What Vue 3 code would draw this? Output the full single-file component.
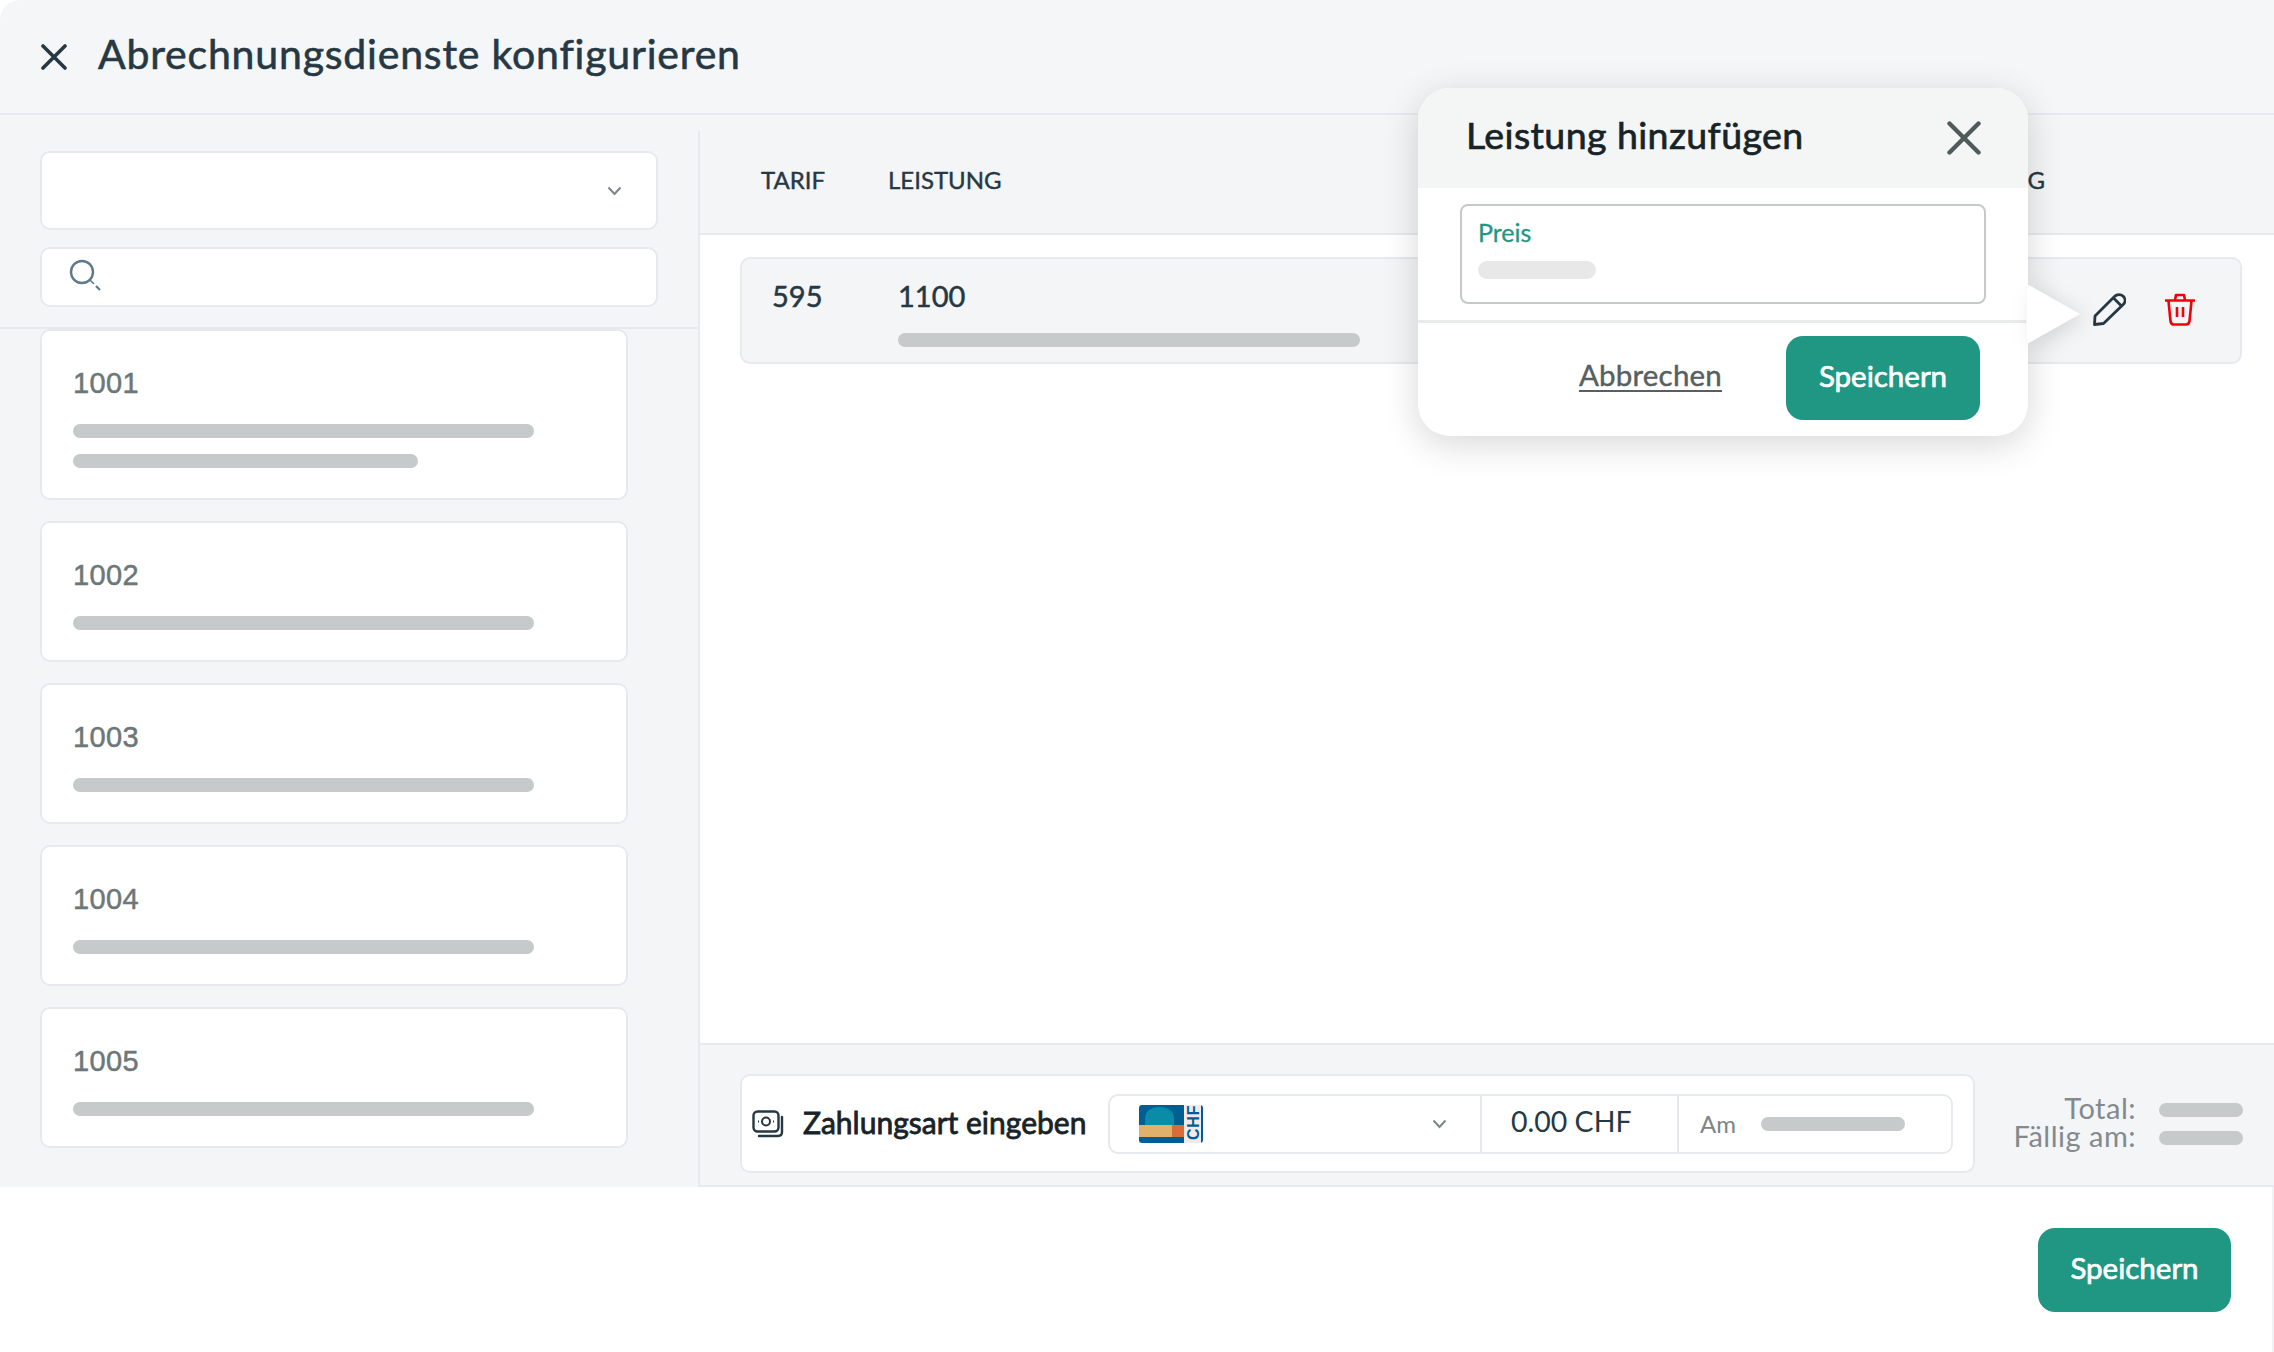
<script setup>
const cards = [
  { id: '1001', bars: [461, 345] },
  { id: '1002', bars: [461] },
  { id: '1003', bars: [461] },
  { id: '1004', bars: [461] },
  { id: '1005', bars: [461] },
]
</script>

<template>
  <div class="app">
    <header class="top">
      <svg class="close" viewBox="0 0 26 26" width="26" height="26"><path d="M2 2 L24 24 M24 2 L2 24" stroke="#263843" stroke-width="3.6" stroke-linecap="round" fill="none"/></svg>
      <h1>Abrechnungsdienste konfigurieren</h1>
    </header>

    <main class="main">
      <aside class="left">
        <div class="filters">
          <div class="select">
            <svg viewBox="0 0 14 10" width="15" height="10"><path d="M1 1.5 L7 8 L13 1.5" stroke="#7c8589" stroke-width="2" fill="none"/></svg>
          </div>
          <div class="search">
            <svg class="search-icon" viewBox="0 0 32 32" width="32" height="32"><circle cx="13" cy="13" r="11" stroke="#5d7a8a" stroke-width="2.4" fill="none"/><path d="M21 21 L25 25" stroke="#5d7a8a" stroke-width="1.6"/><path d="M27 27 L31 31" stroke="#5d7a8a" stroke-width="2.2"/></svg>
          </div>
        </div>
        <div class="cards">
          <div v-for="c in cards" :key="c.id" class="card">
            <div class="card-id">{{ c.id }}</div>
            <div class="card-bars">
              <span v-for="(b, i) in c.bars" :key="i" class="bar" :style="{ width: b + 'px' }"></span>
            </div>
          </div>
        </div>
      </aside>

      <section class="right">
        <div class="thead">
          <span class="th-tarif">TARIF</span>
          <span>LEISTUNG</span>
          <span class="th-end">G</span>
        </div>
        <div class="body">
          <div class="row">
            <div class="cell-tarif">595</div>
            <div class="cell-main">
              <div>1100</div>
              <span class="bar row-bar"></span>
            </div>
            <div class="actions">
              <svg viewBox="0 0 33 33" width="33" height="33"><path d="M1.5 31.5 L2 23 L21.5 3.5 C24 1 27.8 1 30.2 3.3 C32.6 5.8 32.6 9.2 30.2 11.6 L10.5 30.5 Z M20.5 5 L28.5 13" stroke="#263843" stroke-width="2.8" fill="none" stroke-linejoin="round"/></svg>
              <svg viewBox="0 0 32 33" width="32" height="33"><path d="M1 7.5 H31 M11 7 L12 2 H20 L21 7 M4.5 8 L6.5 28 C6.8 30.5 8 31.5 10 31.5 H22 C24 31.5 25.2 30.5 25.5 28 L27.5 8 M13 14 V24 M19 14 V24" stroke="#f4000b" stroke-width="2.6" fill="none" stroke-linejoin="round"/></svg>
            </div>
          </div>
        </div>
        <div class="bottom">
          <div class="pay">
            <svg class="pay-icon" viewBox="0 0 32 28" width="32" height="28"><rect x="1.5" y="1.5" width="25" height="20" rx="4" stroke="#263843" stroke-width="2.4" fill="none"/><circle cx="14" cy="11.5" r="4" stroke="#263843" stroke-width="2" fill="none"/><path d="M6 11.5 H7 M21 11.5 H22" stroke="#263843" stroke-width="2"/><path d="M30 7 V22 C30 24.5 28.5 26 26 26 H7" stroke="#263843" stroke-width="2.4" fill="none" stroke-linecap="round"/></svg>
            <span class="pay-label">Zahlungsart eingeben</span>
            <div class="pay-ctl">
              <div class="pay-method">
                <svg class="chf" viewBox="0 0 64 38" width="64" height="38">
                  <rect width="64" height="38" rx="3" fill="#005f92"/>
                  <path d="M6 20 V14 C6 6 12 2 20.5 2 C29 2 35 6 35 14 V20 Z" fill="#0a8ca8"/>
                  <rect y="20" width="33" height="12" fill="#dfb16b"/>
                  <rect x="33" y="20" width="12" height="12" fill="#d96c3b"/>
                  <rect x="45" width="17" height="38" fill="#f1e9ec"/>
                  <text transform="translate(59.5 35) rotate(-90)" class="chf-text">CHF</text>
                </svg>
                <svg class="chev" viewBox="0 0 14 10" width="15" height="10"><path d="M1 1.5 L7 8 L13 1.5" stroke="#7c8589" stroke-width="2" fill="none"/></svg>
              </div>
              <div class="pay-amount">0.00 CHF</div>
              <div class="pay-date"><span>Am</span><span class="bar date-bar"></span></div>
            </div>
          </div>
          <div class="totals">
            <span class="t-label">Total:</span><span class="bar t-bar"></span>
            <span class="t-label">Fällig am:</span><span class="bar t-bar"></span>
          </div>
        </div>
      </section>
    </main>

    <footer class="foot">
      <button class="btn foot-btn">Speichern</button>
    </footer>

    <div class="popover">
      <div class="pop-head">
        <span>Leistung hinzufügen</span>
        <svg viewBox="0 0 34 34" width="34" height="34"><path d="M2.5 2.5 L31.5 31.5 M31.5 2.5 L2.5 31.5" stroke="#4f5b5b" stroke-width="4.4" stroke-linecap="round" fill="none"/></svg>
      </div>
      <div class="pop-body">
        <div class="pop-input">
          <div class="pop-label">Preis</div>
          <span class="pop-bar"></span>
        </div>
      </div>
      <div class="pop-actions">
        <a class="cancel">Abbrechen</a>
        <button class="btn pop-btn">Speichern</button>
      </div>
      <div class="arrow"></div>
    </div>
  </div>
</template>

<style>
html, body { margin: 0; background: #fff; overflow: hidden; }
</style>

<style scoped>
* { box-sizing: border-box; }
.app {
  position: relative;
  width: 2274px;
  height: 1352px;
  display: flex;
  flex-direction: column;
  font-family: Lato, "Noto Sans", sans-serif;
  color: #263843;
  background: #fff;
  overflow: hidden;
  border-radius: 20px 0 0 0;
}
.top {
  flex: none;
  height: 115px;
  background: #f5f6f8;
  border-bottom: 2px solid #e6eaee;
  display: flex;
  align-items: center;
  padding: 0 0 6px 41px;
  gap: 31px;
}
.top h1 {
  margin: 0;
  font-size: 41px;
  font-weight: 400;
  letter-spacing: 0.8px;
  -webkit-text-stroke: 0.6px #263843;
  color: #263843;
}
.close { flex: none; margin-top: 6px; }
.main {
  flex: 1;
  display: flex;
  min-height: 0;
  background: #f4f5f7;
}
.left {
  flex: none;
  width: 698px;
  display: flex;
  flex-direction: column;
  padding-top: 36px;
}
.filters {
  padding: 0 40px 20px 40px;
  border-bottom: 2px solid #e6eaee;
  display: flex;
  flex-direction: column;
  gap: 17px;
}
.select, .search {
  background: #fff;
  border: 2px solid #e6eaee;
  border-radius: 10px;
  display: flex;
  align-items: center;
}
.select { height: 79px; justify-content: flex-end; padding-right: 34px; }
.search { height: 60px; padding-left: 27px; }
.search-icon { margin-top: -4px; }
.cards {
  padding: 0 0 0 40px;
  display: flex;
  flex-direction: column;
  gap: 21px;
}
.card {
  width: 588px;
  height: 141px;
  background: #fff;
  border: 2px solid #e6eaee;
  border-radius: 10px;
  padding: 34px 0 0 31px;
}
.card:first-child { height: 171px; }
.card-id {
  font-family: "Liberation Sans", sans-serif;
  font-size: 29px;
  line-height: 36px;
  color: #6d7777;
  letter-spacing: 0.4px;
  -webkit-text-stroke: 0.5px #6d7777;
}
.card-bars {
  margin-top: 23px;
  display: flex;
  flex-direction: column;
  gap: 16px;
}
.bar {
  display: block;
  height: 14px;
  border-radius: 7px;
  background: #c6caca;
}
.right {
  flex: 1;
  margin-top: 16px;
  display: flex;
  flex-direction: column;
  border-left: 2px solid #e6eaee;
  min-width: 0;
}
.thead {
  flex: none;
  height: 104px;
  border-bottom: 2px solid #e6eaee;
  display: flex;
  align-items: center;
  padding-bottom: 5px;
  font-size: 24px;
  -webkit-text-stroke: 0.4px #263843;
  color: #263843;
}
.th-tarif { margin-left: 61px; width: 127px; }
.th-end { margin-left: auto; margin-right: 229px; }
.body {
  flex: 1;
  background: #fff;
  padding: 22px 32px 0 40px;
}
.row {
  height: 107px;
  background: #f4f5f7;
  border: 2px solid #e6eaee;
  border-radius: 10px;
  display: flex;
}
.cell-tarif {
  width: 156px;
  padding: 19px 0 0 30px;
  font-size: 29px;
  line-height: 36px;
  -webkit-text-stroke: 0.5px #263843;
}
.cell-main {
  padding-top: 19px;
  font-size: 29px;
  line-height: 36px;
  -webkit-text-stroke: 0.5px #263843;
}
.row-bar { width: 462px; margin-top: 19px; }
.actions {
  margin-left: auto;
  display: flex;
  align-items: center;
  gap: 38px;
  padding-right: 44px;
  margin-top: -2px;
}
.bottom {
  flex: none;
  height: 144px;
  border-top: 2px solid #e6eaee;
  border-bottom: 2px solid #e6eaee;
  display: flex;
  align-items: flex-start;
  padding: 29px 0 0 40px;
}
.pay {
  width: 1236px;
  height: 99px;
  background: #fff;
  border: 2px solid #e6eaee;
  border-radius: 10px;
  display: flex;
  align-items: center;
  padding-left: 10px;
}
.pay-icon { flex: none; }
.pay-label {
  margin-left: 19px;
  width: 305px;
  padding-bottom: 4px;
  font-size: 30px;
  -webkit-text-stroke: 0.8px #172327;
  color: #172327;
  white-space: nowrap;
}
.pay-ctl {
  width: 845px;
  height: 60px;
  border: 2px solid #e6eaee;
  border-radius: 10px;
  display: flex;
}
.pay-method {
  width: 372px;
  display: flex;
  align-items: center;
  padding-left: 29px;
  border-right: 2px solid #e6eaee;
}
.chf { flex: none; overflow: visible; }
.chf-text {
  font-family: "Liberation Sans", sans-serif;
  font-size: 16px;
  font-weight: 700;
  fill: #005f92;
  letter-spacing: 0.8px;
}
.chev { margin-left: auto; margin-right: 33px; }
.pay-amount {
  width: 197px;
  padding-left: 29px;
  border-right: 2px solid #e6eaee;
  font-size: 28.5px;
  line-height: 50px;
  color: #263843;
}
.pay-date {
  display: flex;
  align-items: center;
  padding-left: 21px;
  font-size: 24px;
  color: #7c8589;
}
.date-bar { width: 144px; margin-left: 25px; }
.totals {
  flex: 1;
  display: grid;
  grid-template-columns: 161px 84px;
  grid-auto-rows: 28px;
  column-gap: 23px;
  align-items: center;
  justify-items: end;
  justify-content: end;
  padding: 22px 31px 0 0;
  font-size: 29px;
  letter-spacing: 0.5px;
  color: #838a8e;
}
.t-label { line-height: 28px; white-space: nowrap; margin-top: -4px; }
.t-bar { width: 84px; }
.foot {
  flex: none;
  height: 165px;
  background: #fff;
  display: flex;
  justify-content: flex-end;
  align-items: flex-start;
  padding: 41px 41px 0 0;
  border-right: 2px solid #f1f2f4;
}
.btn {
  border: none;
  background: #1f9783;
  color: #fff;
  font-family: inherit;
  font-size: 29.5px;
  font-weight: 400;
  -webkit-text-stroke: 0.7px #fff;
  border-radius: 17px;
  padding: 0 0 5px;
}
.foot-btn { width: 193px; height: 84px; }
.popover {
  position: absolute;
  left: 1418px;
  top: 88px;
  width: 610px;
  height: 348px;
  background: #fff;
  border-radius: 32px;
  box-shadow: 0 8px 36px rgba(0, 0, 0, 0.16);
  display: flex;
  flex-direction: column;
}
.pop-head {
  flex: none;
  height: 100px;
  background: #f4f5f5;
  border-radius: 32px 32px 0 0;
  display: flex;
  align-items: center;
  justify-content: space-between;
  padding: 0 47px 0 48px;
  font-size: 37.5px;
  letter-spacing: 0.4px;
  -webkit-text-stroke: 0.7px #172327;
  color: #172327;
}
.pop-head > span { padding-bottom: 8px; }
.pop-body {
  flex: none;
  height: 135px;
  padding: 16px 42px 0;
  border-bottom: 3px solid #e9ebeb;
  margin-right: 2px;
}
.pop-input {
  width: 526px;
  height: 100px;
  border: 2px solid #c5c9c9;
  border-radius: 8px;
  padding: 11px 0 0 16px;
}
.pop-label {
  font-size: 25px;
  line-height: 30px;
  -webkit-text-stroke: 0.3px #1f9783;
  color: #1f9783;
}
.pop-bar {
  display: block;
  width: 118px;
  height: 18px;
  margin-top: 14px;
  border-radius: 9px;
  background: #e8e8e8;
}
.pop-actions {
  flex: 1;
  display: flex;
  align-items: flex-start;
  justify-content: flex-end;
  padding: 13px 48px 0 0;
  gap: 64px;
}
.cancel {
  margin-top: 21px;
  font-size: 29.5px;
  letter-spacing: 0.2px;
  -webkit-text-stroke: 0.4px #55605f;
  color: #55605f;
  text-decoration: underline;
  text-underline-offset: 4px;
}
.pop-btn { width: 194px; height: 84px; }
.arrow {
  position: absolute;
  left: 100%;
  top: 196px;
  width: 0;
  height: 0;
  margin-left: -1px;
  border-top: 30px solid transparent;
  border-bottom: 30px solid transparent;
  border-left: 53px solid #fff;
  filter: drop-shadow(6px 4px 10px rgba(0, 0, 0, 0.12));
}
</style>
